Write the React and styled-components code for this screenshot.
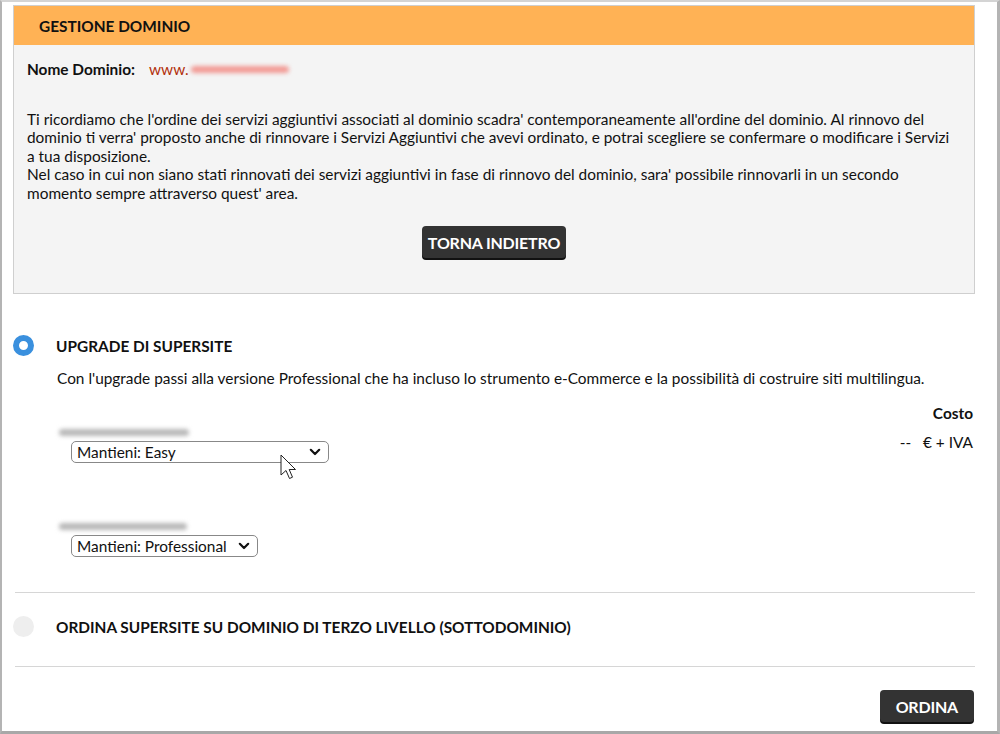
import React from "react";
import styled, { createGlobalStyle } from "styled-components";

const GlobalStyle = createGlobalStyle`
  html, body {
    margin: 0;
    padding: 0;
    background: #ffffff;
  }
  body {
    font-family: Lato, "Open Sans", sans-serif;
    font-size: 15.4px;
    color: #111;
  }
`;

const App = () => {
  return (
    <>
      <GlobalStyle />
      <Frame>
        <Panel>
          <PanelHeader>GESTIONE DOMINIO</PanelHeader>
          <PanelBody>
            <DomainRow>
              <b>Nome Dominio:</b>
              <DomainValue>
                www.<Blur color="#f29a94" width="98px" />
              </DomainValue>
            </DomainRow>
            <Notice>
              Ti ricordiamo che l'ordine dei servizi aggiuntivi associati al dominio scadra' contemporaneamente
              all'ordine del dominio. Al rinnovo del dominio ti verra' proposto anche di rinnovare i Servizi
              Aggiuntivi che avevi ordinato, e potrai scegliere se confermare o modificare i Servizi a tua
              disposizione.
              <br />
              Nel caso in cui non siano stati rinnovati dei servizi aggiuntivi in fase di rinnovo del dominio,
              sara' possibile rinnovarli in un secondo momento sempre attraverso quest' area.
            </Notice>
            <Center>
              <DarkButton>TORNA INDIETRO</DarkButton>
            </Center>
          </PanelBody>
        </Panel>

        <Option>
          <OptionHead>
            <Radio checked />
            <OptionTitle>UPGRADE DI SUPERSITE</OptionTitle>
          </OptionHead>
          <OptionBody>
            <Description>
              Con l'upgrade passi alla versione Professional che ha incluso lo strumento e-Commerce e la
              possibilità di costruire siti multilingua.
            </Description>
            <UpgradeGrid>
              <Sites>
                <Site>
                  <SiteName>
                    <Blur color="#b8b8b8" width="130px" />
                  </SiteName>
                  <SelectWrap>
                    <Select defaultValue="easy" style={{ width: 258 }}>
                      <option value="easy">Mantieni: Easy</option>
                      <option value="pro">Upgrade: Professional</option>
                    </Select>
                    <Chevron />
                    <Cursor />
                  </SelectWrap>
                </Site>
                <Site>
                  <SiteName>
                    <Blur color="#b8b8b8" width="128px" />
                  </SiteName>
                  <SelectWrap>
                    <Select defaultValue="pro" style={{ width: 187 }}>
                      <option value="pro">Mantieni: Professional</option>
                    </Select>
                    <Chevron />
                  </SelectWrap>
                </Site>
              </Sites>
              <Price>
                <b>Costo</b>
                <span>--&nbsp;&nbsp;&nbsp;€ + IVA</span>
              </Price>
            </UpgradeGrid>
          </OptionBody>
        </Option>

        <Divider />

        <Option compact>
          <OptionHead>
            <Radio />
            <OptionTitle>ORDINA SUPERSITE SU DOMINIO DI TERZO LIVELLO (SOTTODOMINIO)</OptionTitle>
          </OptionHead>
        </Option>

        <Divider />

        <Footer>
          <DarkButton small>ORDINA</DarkButton>
        </Footer>
      </Frame>
    </>
  );
};

const Chevron = () => (
  <ChevronIcon width="12" height="8" viewBox="0 0 12 8">
    <path d="M1.8 1.8 L6 6 L10.2 1.8" fill="none" stroke="#111" strokeWidth="2.2" strokeLinecap="round" strokeLinejoin="round" />
  </ChevronIcon>
);

const Cursor = () => (
  <CursorIcon width="20" height="30" viewBox="0 0 20 30">
    <path
      d="M1 1 L1 21 L6 16.5 L9.5 24.5 L12.5 23.2 L9.2 15.5 L15.5 15.5 Z"
      fill="#fff"
      stroke="#222"
      strokeWidth="1"
      strokeLinejoin="round"
    />
  </CursorIcon>
);

const Frame = styled.div`
  box-sizing: border-box;
  width: 1000px;
  height: 734px;
  border-top: 2px solid #d4d4d4;
  border-left: 2px solid #b4b4b4;
  border-right: 3px solid #b4b4b4;
  border-bottom: 3px solid #a8a8a8;
  padding: 3px 22px 0 11px;
  display: flex;
  flex-direction: column;
`;

const Panel = styled.div`
  border: 1px solid #cfcfcf;
  background: #f4f4f4;
`;

const PanelHeader = styled.div`
  background: #ffb255;
  height: 39px;
  display: flex;
  align-items: center;
  padding-left: 25px;
  font-weight: 700;
  color: #111;
`;

const PanelBody = styled.div`
  padding: 15px 13px 35px 13px;
`;

const DomainRow = styled.div`
  display: flex;
  align-items: center;
  gap: 14px;
  line-height: 18px;
`;

const DomainValue = styled.span`
  color: #b2300c;
  display: inline-flex;
  align-items: center;
`;

const Blur = styled.span`
  display: inline-block;
  width: ${(p) => p.width};
  height: 7px;
  border-radius: 4px;
  background: ${(p) => p.color};
  filter: blur(2.3px);
  margin-left: 2px;
`;

const Notice = styled.p`
  margin: 32px 7px 0 0;
  line-height: 18.4px;
  color: #111;
`;

const Center = styled.div`
  display: flex;
  justify-content: center;
  margin-top: 24px;
`;

const DarkButton = styled.button`
  font-family: Lato, sans-serif;
  font-weight: 700;
  font-size: 16px;
  color: #fff;
  background: #333;
  border: none;
  border-radius: 4px;
  height: 32px;
  padding: 0 ${(p) => (p.small ? "16px" : "6px")};
  box-shadow: 0 2px 0 #111;
  letter-spacing: -0.2px;
  cursor: pointer;
`;

const Option = styled.div`
  padding: ${(p) => (p.compact ? "23px 0 29px" : "41px 0 35px")};
`;

const OptionHead = styled.div`
  display: flex;
  align-items: center;
  gap: 22px;
`;

const Radio = styled.span`
  box-sizing: border-box;
  width: 21px;
  height: 21px;
  border-radius: 50%;
  flex-shrink: 0;
  background: ${(p) => (p.checked ? "#fff" : "#eeeeee")};
  border: ${(p) => (p.checked ? "6.5px solid #3a90de" : "none")};
`;

const OptionTitle = styled.span`
  font-weight: 700;
  color: #111;
`;

const OptionBody = styled.div`
  padding-left: 44px;
`;

const Description = styled.p`
  margin: 13px 0 0;
  line-height: 18px;
`;

const UpgradeGrid = styled.div`
  display: flex;
  justify-content: space-between;
  margin-top: 17px;
`;

const Sites = styled.div`
  display: flex;
  flex-direction: column;
  gap: 58px;
  padding-top: 23px;
`;

const Site = styled.div`
  display: flex;
  flex-direction: column;
`;

const SiteName = styled.div`
  height: 11px;
  display: flex;
  align-items: center;
`;

const SelectWrap = styled.div`
  position: relative;
  margin-left: 14px;
  margin-top: 3px;
  width: fit-content;
`;

const Select = styled.select`
  appearance: none;
  box-sizing: border-box;
  height: 22px;
  font-family: Lato, sans-serif;
  font-size: 15.4px;
  color: #111;
  background: #fff;
  border: 1px solid #888;
  border-radius: 5px;
  padding: 0 24px 0 5px;
`;

const ChevronIcon = styled.svg`
  position: absolute;
  right: 8px;
  top: 7px;
  pointer-events: none;
`;

const CursorIcon = styled.svg`
  position: absolute;
  left: 209px;
  top: 13px;
  pointer-events: none;
`;

const Price = styled.div`
  display: flex;
  flex-direction: column;
  align-items: flex-end;
  gap: 11px;
  line-height: 18px;
  padding-right: 2px;
`;

const Divider = styled.hr`
  border: none;
  border-top: 1px solid #d6d6d6;
  margin: 0;
  width: 960px;
  margin-left: 2px;
`;

const Footer = styled.div`
  display: flex;
  justify-content: flex-end;
  padding-top: 23px;
  padding-right: 1px;
`;

export default App;
